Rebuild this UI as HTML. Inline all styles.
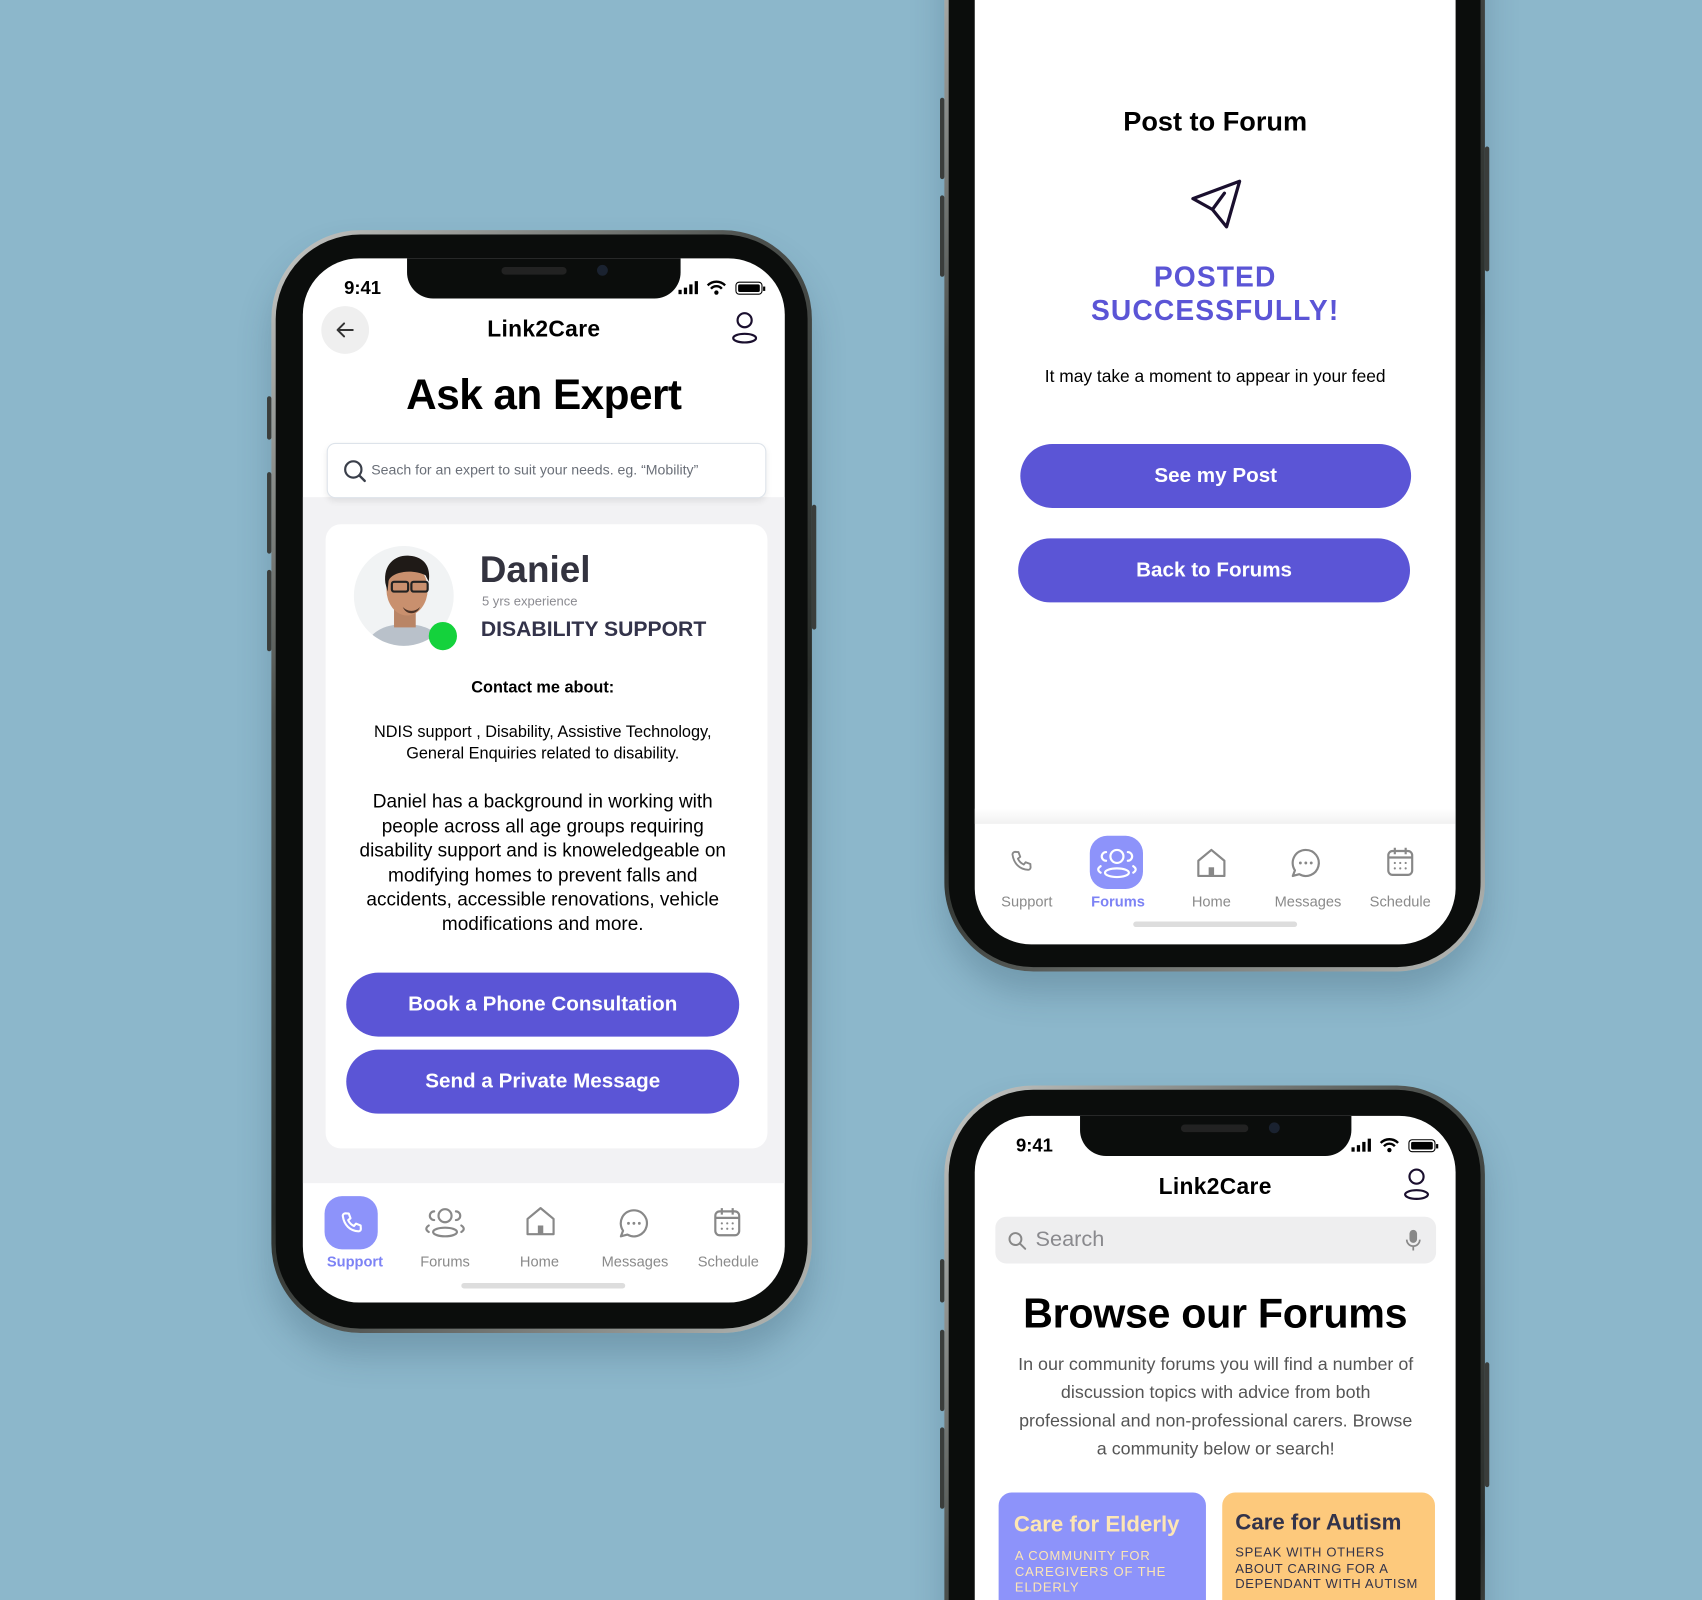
<!DOCTYPE html>
<html><head><meta charset="utf-8">
<style>
*{margin:0;padding:0;box-sizing:border-box}
html,body{width:1702px;height:1600px;overflow:hidden;background:#8cb7cb}
body{font-family:"Liberation Sans",sans-serif}
#clip{position:relative;width:1702px;height:1600px;overflow:hidden}
#w{position:absolute;left:0;top:0;width:1568px;height:1474px;overflow:hidden;transform:scale(1.08546);transform-origin:0 0}
.frame{position:absolute;border-radius:82px;background:linear-gradient(135deg,#c9cbc9,#4b4f4c 30%,#2a2e2b 60%,#b8bbb8);box-shadow:0 20px 30px rgba(40,70,90,.25)}
.bez{position:absolute;left:4px;top:4px;right:4px;bottom:4px;border-radius:78px;background:#0b0d0c}
.scr{position:absolute;background:#fff;border-radius:52px;overflow:hidden}
.notch{position:absolute;background:#0b0d0c;border-radius:0 0 24px 24px;height:37px;top:0}
.abs{position:absolute}
.c{text-align:center}
.btn{position:absolute;background:#5b55d6;color:#fff;border-radius:30px;font-weight:bold;font-size:19px;display:flex;align-items:center;justify-content:center}
.nav .lab{position:absolute;font-size:13.5px;color:#8a8a8a;width:80px;text-align:center}
.nav svg{position:absolute}
.side{position:absolute;background:#3a3d3b;width:4px;border-radius:2px}
</style></head><body><div id="clip"><div id="w">

<!-- Phone 1 -->
<div class="frame" style="left:250px;top:212px;width:498px;height:1016px"><div class="bez"></div></div>
<div class="side" style="left:246px;top:365px;height:40px"></div>
<div class="side" style="left:246px;top:435px;height:75px"></div>
<div class="side" style="left:246px;top:525px;height:75px"></div>
<div class="side" style="left:748px;top:465px;height:115px"></div>
<div class="scr" style="left:279px;top:238px;width:444px;height:962px">
  <div class="abs" style="left:0;top:220px;width:444px;height:632px;background:#f2f2f4"></div>
  <div class="notch" style="left:96px;width:252px"></div>
  <div class="abs" style="left:183px;top:8px;width:60px;height:7px;border-radius:4px;background:#222"></div>
  <div class="abs" style="left:271px;top:6px;width:10px;height:10px;border-radius:50%;background:#1a2230"></div>
  <div class="abs" style="left:38px;top:18px;font-size:17px;font-weight:bold">9:41</div>
  <svg class="abs" style="left:346px;top:20px" width="82" height="16" viewBox="0 0 82 16"><rect x="0" y="9" width="3" height="4" fill="#000"/><rect x="5" y="7" width="3" height="6" fill="#000"/><rect x="10" y="4" width="3" height="9" fill="#000"/><rect x="15" y="1" width="3" height="12" fill="#000"/><path d="M27 5a11 11 0 0 1 16 0M30 8a6.5 6.5 0 0 1 10 0" stroke="#000" stroke-width="2.2" fill="none"/><circle cx="35" cy="11.5" r="2" fill="#000"/><rect x="53" y="2" width="24" height="11" rx="3" fill="none" stroke="#000" stroke-width="1"/><rect x="55" y="4" width="20" height="7" rx="1.5" fill="#000"/><rect x="78" y="6" width="2" height="4" fill="#000"/></svg>
  <div class="abs" style="left:17px;top:44px;width:44px;height:44px;border-radius:50%;background:#efefef"></div>
  <svg class="abs" style="left:29px;top:56px" width="20" height="20" viewBox="0 0 20 20"><path d="M17 10H3M9 4L3 10l6 6" stroke="#333" stroke-width="1.8" fill="none" stroke-linecap="round" stroke-linejoin="round"/></svg>
  <div class="abs c" style="left:0;width:444px;top:54px;font-size:21px;font-weight:bold;letter-spacing:.3px">Link2Care</div>
  <svg class="abs" style="left:395px;top:49px" width="24" height="30" viewBox="0 0 24 30"><circle cx="12" cy="8" r="6.5" stroke="#1a0f2e" stroke-width="2" fill="none"/><ellipse cx="12" cy="24.5" rx="10.5" ry="4" stroke="#1a0f2e" stroke-width="2" fill="none"/></svg>
  <div class="abs c" style="left:0;width:444px;top:105px;font-size:39px;font-weight:bold;letter-spacing:-.5px">Ask an Expert</div>
  <div class="abs" style="left:22px;top:170px;width:405px;height:51px;background:#fff;border:1px solid #dde3ea;border-radius:8px;box-shadow:0 3px 6px rgba(0,0,0,.08)"></div>
  <svg class="abs" style="left:37px;top:185px" width="22" height="22" viewBox="0 0 22 22"><circle cx="9.5" cy="9.5" r="7.5" stroke="#3a3f4a" stroke-width="2" fill="none"/><path d="M15 15l5 5" stroke="#3a3f4a" stroke-width="2.2" stroke-linecap="round"/></svg>
  <div class="abs" style="left:63px;top:187px;font-size:13px;color:#6a6f78">Seach for an expert to suit your needs. eg. “Mobility”</div>
  <div class="abs" style="left:21px;top:245px;width:407px;height:575px;background:#fff;border-radius:14px"></div>
  <svg class="abs" style="left:46px;top:265px" width="100" height="100" viewBox="0 0 100 100"><defs><clipPath id="cp"><circle cx="47" cy="46" r="46"/></clipPath></defs><circle cx="47" cy="46" r="46" fill="#f1f3f4"/><g clip-path="url(#cp)"><path d="M8 100C14 78 30 72 48 72s34 6 40 28z" fill="#b9c1ca"/><rect x="38" y="55" width="20" height="20" fill="#b98566"/><ellipse cx="50" cy="40" rx="19" ry="24" fill="#c9906e"/><path d="M30 34c-2-18 10-26 22-25 14 1 20 10 18 24l-3-6c-6-3-14-4-20-3-6 1-12 3-14 8l-1 10z" fill="#1f1a17"/><path d="M46 56c4 5 12 5 16 0-3 8-13 8-16 0z" fill="#4a3328"/><rect x="36" y="33" width="15" height="9" rx="2" fill="none" stroke="#222" stroke-width="2"/><rect x="54" y="33" width="15" height="9" rx="2" fill="none" stroke="#222" stroke-width="2"/></g></svg>
  <div class="abs" style="left:116px;top:335px;width:26px;height:26px;border-radius:50%;background:#14d23c"></div>
  <div class="abs" style="left:163px;top:268px;font-size:34px;font-weight:bold;color:#33333f">Daniel</div>
  <div class="abs" style="left:165px;top:309px;font-size:12px;color:#8a8a90">5 yrs experience</div>
  <div class="abs" style="left:164px;top:331px;font-size:19.5px;font-weight:bold;color:#33334a">DISABILITY SUPPORT</div>
  <div class="abs c" style="left:0;width:442px;top:387px;font-size:15px;font-weight:bold">Contact me about:</div>
  <div class="abs c" style="left:0;width:442px;top:427px;font-size:15px;line-height:20px">NDIS support , Disability, Assistive Technology,<br>General Enquiries related to disability.</div>
  <div class="abs c" style="left:48px;width:346px;top:489px;font-size:17.5px;line-height:22.6px">Daniel has a background in working with people across all age groups requiring disability support and is knoweledgeable on modifying homes to prevent falls and accidents, accessible renovations, vehicle modifications and more.</div>
  <div class="btn" style="left:40px;top:658px;width:362px;height:59px">Book a Phone Consultation</div>
  <div class="btn" style="left:40px;top:729px;width:362px;height:59px">Send a Private Message</div>
  <div class="nav">
    <div class="abs" style="left:20px;top:864px;width:49px;height:49px;border-radius:16px;background:#8d93fa"></div>
    <svg style="left:32px;top:876px" width="26" height="26" viewBox="0 0 24 24"><path d="M6.5 3.5l3 .2 1.5 4-2 1.6c1 2.3 2.8 4 5 5l1.6-2 4 1.5.2 3c0 1-1 2-2 2C10.5 18.5 5.5 13.5 4.4 5.6c0-1 1-2 2.1-2.1z" fill="none" stroke="#fff" stroke-width="1.8" stroke-linejoin="round"/></svg>
    <div class="lab" style="left:8px;top:917px;color:#7d83f5;font-weight:bold">Support</div>
    <svg style="left:112px;top:873px" width="38" height="30" viewBox="0 0 38 30"><circle cx="19" cy="9" r="6" fill="none" stroke="#888" stroke-width="2"/><ellipse cx="19" cy="24" rx="11" ry="4" fill="none" stroke="#888" stroke-width="2"/><path d="M9 5a4 4 0 0 0 0 8M29 5a4 4 0 0 1 0 8M4 18c-3 2-3 4 0 6M34 18c3 2 3 4 0 6" fill="none" stroke="#888" stroke-width="2" stroke-linecap="round"/></svg>
    <div class="lab" style="left:91px;top:917px">Forums</div>
    <svg style="left:204px;top:872px" width="30" height="30" viewBox="0 0 30 30"><path d="M3 13L15 3l12 10v14H3z" fill="none" stroke="#888" stroke-width="2" stroke-linejoin="round"/><rect x="12.5" y="19" width="5" height="8" fill="#888"/></svg>
    <div class="lab" style="left:178px;top:917px">Home</div>
    <svg style="left:290px;top:874px" width="30" height="30" viewBox="0 0 30 30"><path d="M15 3a12 12 0 1 1-6 22.4L3 27l2-5.2A12 12 0 0 1 15 3z" fill="none" stroke="#888" stroke-width="2" stroke-linejoin="round"/><circle cx="10" cy="15" r="1.3" fill="#888"/><circle cx="15" cy="15" r="1.3" fill="#888"/><circle cx="20" cy="15" r="1.3" fill="#888"/></svg>
    <div class="lab" style="left:266px;top:917px">Messages</div>
    <svg style="left:377px;top:873px" width="28" height="30" viewBox="0 0 28 30"><rect x="3" y="5" width="22" height="22" rx="4" fill="none" stroke="#888" stroke-width="2"/><path d="M3 11h22M9 2v6M19 2v6" stroke="#888" stroke-width="2"/><g fill="#888"><circle cx="9" cy="16" r="1"/><circle cx="14" cy="16" r="1"/><circle cx="19" cy="16" r="1"/><circle cx="9" cy="21" r="1"/><circle cx="14" cy="21" r="1"/><circle cx="19" cy="21" r="1"/></g></svg>
    <div class="lab" style="left:352px;top:917px">Schedule</div>
  </div>
  <div class="abs" style="left:146px;top:944px;width:151px;height:5px;border-radius:3px;background:#ddd"></div>
</div>

<!-- Phone 2 -->
<div class="frame" style="left:870px;top:-130px;width:498px;height:1025px"><div class="bez"></div></div>
<div class="side" style="left:866px;top:90px;height:75px"></div>
<div class="side" style="left:866px;top:180px;height:75px"></div>
<div class="side" style="left:1368px;top:135px;height:115px"></div>
<div class="scr" style="left:898px;top:-110px;width:443px;height:980px">
  <div class="abs c" style="left:0;width:443px;top:208px;font-size:25px;font-weight:bold">Post to Forum</div>
  <svg class="abs" style="left:197px;top:272px" width="52" height="52" viewBox="0 0 52 52"><path d="M4 21L47 5 35 47 22 31z M22 31l11-15" fill="none" stroke="#1a0f2e" stroke-width="3" stroke-linejoin="round" stroke-linecap="round"/></svg>
  <div class="abs c" style="left:0;width:443px;top:350px;font-size:26px;font-weight:bold;letter-spacing:1px;line-height:31px;color:#5b55d6">POSTED<br>SUCCESSFULLY!</div>
  <div class="abs c" style="left:0;width:443px;top:449px;font-size:16px">It may take a moment to appear in your feed</div>
  <div class="btn" style="left:42px;top:519px;width:360px;height:59px">See my Post</div>
  <div class="btn" style="left:40px;top:606px;width:361px;height:59px">Back to Forums</div>
  <div class="abs" style="left:0;top:855px;width:443px;height:14px;background:linear-gradient(#fff,#f1f1f1)"></div>
  <div class="nav">
    <svg style="left:30px;top:891px" width="26" height="26" viewBox="0 0 24 24"><path d="M6.5 3.5l3 .2 1.5 4-2 1.6c1 2.3 2.8 4 5 5l1.6-2 4 1.5.2 3c0 1-1 2-2 2C10.5 18.5 5.5 13.5 4.4 5.6c0-1 1-2 2.1-2.1z" fill="none" stroke="#888" stroke-width="1.6" stroke-linejoin="round"/></svg>
    <div class="lab" style="left:8px;top:933px">Support</div>
    <div class="abs" style="left:106px;top:880px;width:49px;height:49px;border-radius:16px;background:#8d93fa"></div>
    <svg style="left:112px;top:890px" width="38" height="30" viewBox="0 0 38 30"><circle cx="19" cy="9" r="6" fill="none" stroke="#fff" stroke-width="2"/><ellipse cx="19" cy="24" rx="11" ry="4" fill="none" stroke="#fff" stroke-width="2"/><path d="M9 5a4 4 0 0 0 0 8M29 5a4 4 0 0 1 0 8M4 18c-3 2-3 4 0 6M34 18c3 2 3 4 0 6" fill="none" stroke="#fff" stroke-width="2" stroke-linecap="round"/></svg>
    <div class="lab" style="left:92px;top:933px;color:#7d83f5;font-weight:bold">Forums</div>
    <svg style="left:203px;top:890px" width="30" height="30" viewBox="0 0 30 30"><path d="M3 13L15 3l12 10v14H3z" fill="none" stroke="#888" stroke-width="2" stroke-linejoin="round"/><rect x="12.5" y="19" width="5" height="8" fill="#888"/></svg>
    <div class="lab" style="left:178px;top:933px">Home</div>
    <svg style="left:290px;top:890px" width="30" height="30" viewBox="0 0 30 30"><path d="M15 3a12 12 0 1 1-6 22.4L3 27l2-5.2A12 12 0 0 1 15 3z" fill="none" stroke="#888" stroke-width="2" stroke-linejoin="round"/><circle cx="10" cy="15" r="1.3" fill="#888"/><circle cx="15" cy="15" r="1.3" fill="#888"/><circle cx="20" cy="15" r="1.3" fill="#888"/></svg>
    <div class="lab" style="left:267px;top:933px">Messages</div>
    <svg style="left:378px;top:889px" width="28" height="30" viewBox="0 0 28 30"><rect x="3" y="5" width="22" height="22" rx="4" fill="none" stroke="#888" stroke-width="2"/><path d="M3 11h22M9 2v6M19 2v6" stroke="#888" stroke-width="2"/><g fill="#888"><circle cx="9" cy="16" r="1"/><circle cx="14" cy="16" r="1"/><circle cx="19" cy="16" r="1"/><circle cx="9" cy="21" r="1"/><circle cx="14" cy="21" r="1"/><circle cx="19" cy="21" r="1"/></g></svg>
    <div class="lab" style="left:352px;top:933px">Schedule</div>
  </div>
  <div class="abs" style="left:146px;top:959px;width:151px;height:5px;border-radius:3px;background:#ddd"></div>
</div>

<!-- Phone 3 -->
<div class="frame" style="left:870px;top:1000px;width:498px;height:1016px"><div class="bez"></div></div>
<div class="side" style="left:866px;top:1160px;height:40px"></div>
<div class="side" style="left:866px;top:1225px;height:75px"></div>
<div class="side" style="left:866px;top:1315px;height:75px"></div>
<div class="side" style="left:1368px;top:1255px;height:115px"></div>
<div class="scr" style="left:898px;top:1028px;width:443px;height:962px">
  <div class="notch" style="left:97px;width:250px"></div>
  <div class="abs" style="left:190px;top:8px;width:62px;height:7px;border-radius:4px;background:#222"></div>
  <div class="abs" style="left:271px;top:6px;width:10px;height:10px;border-radius:50%;background:#1a2230"></div>
  <div class="abs" style="left:38px;top:18px;font-size:17px;font-weight:bold">9:41</div>
  <svg class="abs" style="left:347px;top:20px" width="82" height="16" viewBox="0 0 82 16"><rect x="0" y="9" width="3" height="4" fill="#000"/><rect x="5" y="7" width="3" height="6" fill="#000"/><rect x="10" y="4" width="3" height="9" fill="#000"/><rect x="15" y="1" width="3" height="12" fill="#000"/><path d="M27 5a11 11 0 0 1 16 0M30 8a6.5 6.5 0 0 1 10 0" stroke="#000" stroke-width="2.2" fill="none"/><circle cx="35" cy="11.5" r="2" fill="#000"/><rect x="53" y="2" width="24" height="11" rx="3" fill="none" stroke="#000" stroke-width="1"/><rect x="55" y="4" width="20" height="7" rx="1.5" fill="#000"/><rect x="78" y="6" width="2" height="4" fill="#000"/></svg>
  <div class="abs c" style="left:0;width:443px;top:54px;font-size:21px;font-weight:bold;letter-spacing:.3px">Link2Care</div>
  <svg class="abs" style="left:395px;top:48px" width="24" height="30" viewBox="0 0 24 30"><circle cx="12" cy="8" r="6.5" stroke="#1a0f2e" stroke-width="2" fill="none"/><ellipse cx="12" cy="24.5" rx="10.5" ry="4" stroke="#1a0f2e" stroke-width="2" fill="none"/></svg>
  <div class="abs" style="left:19px;top:93px;width:406px;height:43px;border-radius:10px;background:#eeeeef"></div>
  <svg class="abs" style="left:30px;top:106px" width="18" height="18" viewBox="0 0 18 18"><circle cx="7.5" cy="7.5" r="5.5" stroke="#888" stroke-width="1.8" fill="none"/><path d="M11.5 11.5l5 5" stroke="#888" stroke-width="1.8" stroke-linecap="round"/></svg>
  <div class="abs" style="left:56px;top:103px;font-size:20px;color:#8a8a8e">Search</div>
  <svg class="abs" style="left:396px;top:104px" width="16" height="22" viewBox="0 0 16 22"><rect x="4.5" y="1" width="7" height="12" rx="3.5" fill="#888"/><path d="M2 10a6 6 0 0 0 12 0M8 16v4" stroke="#888" stroke-width="1.6" fill="none"/></svg>
  <div class="abs c" style="left:0;width:443px;top:162px;font-size:38px;font-weight:bold;letter-spacing:-.3px">Browse our Forums</div>
  <div class="abs c" style="left:38px;width:368px;top:216px;font-size:16.5px;line-height:26px;color:#555">In our community forums you will find a number of discussion topics with advice from both professional and non-professional carers. Browse a community below or search!</div>
  <div class="abs" style="left:22px;top:347px;width:191px;height:150px;border-radius:12px;background:#8d93fa"></div>
  <div class="abs" style="left:36px;top:365px;font-size:20.5px;font-weight:bold;color:#fde6b5">Care for Elderly</div>
  <div class="abs" style="left:37px;top:398px;font-size:12px;line-height:14.5px;letter-spacing:.8px;color:#fde6b5">A COMMUNITY FOR<br>CAREGIVERS OF THE<br>ELDERLY</div>
  <div class="abs" style="left:228px;top:347px;width:196px;height:150px;border-radius:12px;background:#fdc97c"></div>
  <div class="abs" style="left:240px;top:363px;font-size:20.5px;font-weight:bold;color:#33334a">Care for Autism</div>
  <div class="abs" style="left:240px;top:395px;font-size:12px;line-height:14.5px;letter-spacing:.6px;color:#33334a">SPEAK WITH OTHERS<br>ABOUT CARING FOR A<br>DEPENDANT WITH AUTISM</div>
</div>

</div></div></body></html>
